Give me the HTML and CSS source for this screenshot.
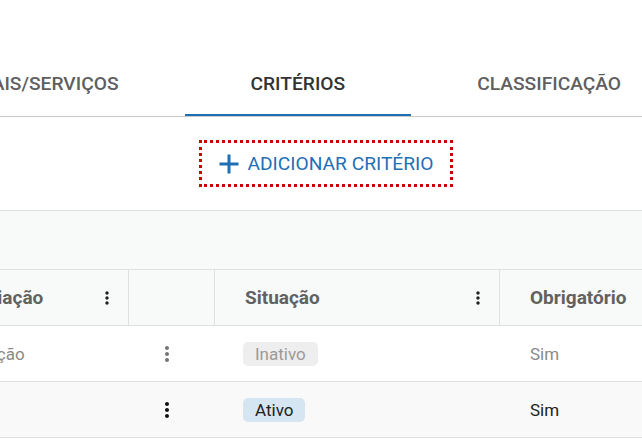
FILE: index.html
```html
<!DOCTYPE html>
<html lang="pt">
<head>
<meta charset="utf-8">
<link rel="stylesheet" href="styles.css">
</head>
<body>
<div class="page">
  <nav class="tabs">
    <div class="tab">MATERIAIS/SERVIÇOS</div>
    <div class="tab active">CRITÉRIOS</div>
    <div class="tab">CLASSIFICAÇÃO</div>
  </nav>
  <div class="actions">
    <button class="add-btn" type="button">
      <svg class="plus" viewBox="0 0 20 20" width="20" height="20"><path d="M10 0.5v19M0.5 10h19" stroke="currentColor" stroke-width="3" fill="none"/></svg>
      <span>ADICIONAR CRITÉRIO</span>
    </button>
  </div>
  <div class="table">
    <div class="toolbar"></div>
    <div class="row head">
      <div class="cell sep"><span class="hlabel">Tipo de avaliação</span><svg class="kebab sm" viewBox="0 0 24 24"><path d="M12 8c1.1 0 2-.9 2-2s-.9-2-2-2-2 .9-2 2 .9 2 2 2zm0 2c-1.1 0-2 .9-2 2s.9 2 2 2 2-.9 2-2-.9-2-2-2zm0 6c-1.1 0-2 .9-2 2s.9 2 2 2 2-.9 2-2-.9-2-2-2z"/></svg></div>
      <div class="cell sep"></div>
      <div class="cell sep"><span class="hlabel">Situação</span><svg class="kebab sm" viewBox="0 0 24 24"><path d="M12 8c1.1 0 2-.9 2-2s-.9-2-2-2-2 .9-2 2 .9 2 2 2zm0 2c-1.1 0-2 .9-2 2s.9 2 2 2 2-.9 2-2-.9-2-2-2zm0 6c-1.1 0-2 .9-2 2s.9 2 2 2 2-.9 2-2-.9-2-2-2z"/></svg></div>
      <div class="cell"><span class="hlabel">Obrigatório</span></div>
    </div>
    <div class="row inactive">
      <div class="cell">Eixo de avaliação</div>
      <div class="cell menu"><svg class="kebab" viewBox="0 0 24 24"><path d="M12 8c1.1 0 2-.9 2-2s-.9-2-2-2-2 .9-2 2 .9 2 2 2zm0 2c-1.1 0-2 .9-2 2s.9 2 2 2 2-.9 2-2-.9-2-2-2zm0 6c-1.1 0-2 .9-2 2s.9 2 2 2 2-.9 2-2-.9-2-2-2z"/></svg></div>
      <div class="cell chipcell"><span class="chip">Inativo</span></div>
      <div class="cell">Sim</div>
    </div>
    <div class="row active-row">
      <div class="cell"></div>
      <div class="cell menu"><svg class="kebab" viewBox="0 0 24 24"><path d="M12 8c1.1 0 2-.9 2-2s-.9-2-2-2-2 .9-2 2 .9 2 2 2zm0 2c-1.1 0-2 .9-2 2s.9 2 2 2 2-.9 2-2-.9-2-2-2zm0 6c-1.1 0-2 .9-2 2s.9 2 2 2 2-.9 2-2-.9-2-2-2z"/></svg></div>
      <div class="cell chipcell"><span class="chip blue">Ativo</span></div>
      <div class="cell">Sim</div>
    </div>
  </div>
</div>
</body>
</html>
```
FILE: styles.css
```css
html, body {
  margin: 0;
  padding: 0;
  background: #fff;
}
body {
  width: 642px;
  height: 438px;
  overflow: hidden;
  font-family: Roboto, "Liberation Sans", sans-serif;
}
.page {
  width: 642px;
  overflow: hidden;
}
.tabs {
  display: flex;
  margin-top: 52px;
  margin-left: -143px;
  border-bottom: 1px solid #c8c8c8;
  width: 950px;
}
.tab {
  flex: none;
  height: 62px;
  padding: 0 66px;
  display: flex;
  align-items: center;
  font-size: 19.2px;
  font-weight: 500;
  color: #5f5f5f;
  border-bottom: 2px solid transparent;
}
.tab.active {
  color: #333;
  border-bottom-color: #1f6fb5;
}
.actions {
  display: flex;
  justify-content: center;
  padding: 26px 0 26px 10px;
}
.add-btn {
  display: flex;
  align-items: center;
  gap: 8px;
  width: 248px;
  height: 41px;
  justify-content: center;
  border: none;
  background: #fff;
  outline: 3px dotted #d00000;
  font-family: inherit;
  font-size: 19.2px;
  color: #1f6fb5;
  padding: 0 0 0 1px;
}
.plus {
  width: 20px;
  height: 20px;
}
.table {
  margin-left: -136px;
  width: 800px;
  border-top: 1px solid #e0e0e0;
}
.toolbar {
  height: 58px;
  background: #f8f9f9;
  border-bottom: 1px solid #e0e0e0;
}
.row {
  display: grid;
  grid-template-columns: 265px 86px 285px 1fr;
  height: 55px;
  border-bottom: 1px solid #e0e0e0;
  font-size: 17px;
}
.row.head {
  background: #f8f9f9;
}
.row.inactive {
  background: #fff;
  color: #8a8a8a;
}
.row.active-row {
  background: #f9f9f9;
  color: #212121;
}
.cell {
  display: flex;
  align-items: center;
  padding: 0 11px 0 30px;
  min-width: 0;
}
.cell.sep {
  border-right: 1px solid #e0e0e0;
}
.hlabel {
  flex: 1;
  font-size: 19px;
  font-weight: 700;
  color: #616161;
}
.kebab {
  width: 24px;
  height: 24px;
  fill: currentColor;
  flex: none;
}
.kebab.sm {
  width: 20px;
  height: 20px;
  fill: #212121;
}
.cell.menu {
  padding-left: 26px;
}
.inactive .kebab {
  fill: #757575;
}
.active-row .kebab {
  fill: #111;
}
.cell.chipcell {
  padding-left: 28px;
}
.chip {
  display: inline-block;
  padding: 0 12px;
  height: 24px;
  line-height: 24px;
  border-radius: 5px;
  background: #eeeeee;
  color: #9a9a9a;
}
.chip.blue {
  background: #d6e5f2;
  color: #212121;
}
```
